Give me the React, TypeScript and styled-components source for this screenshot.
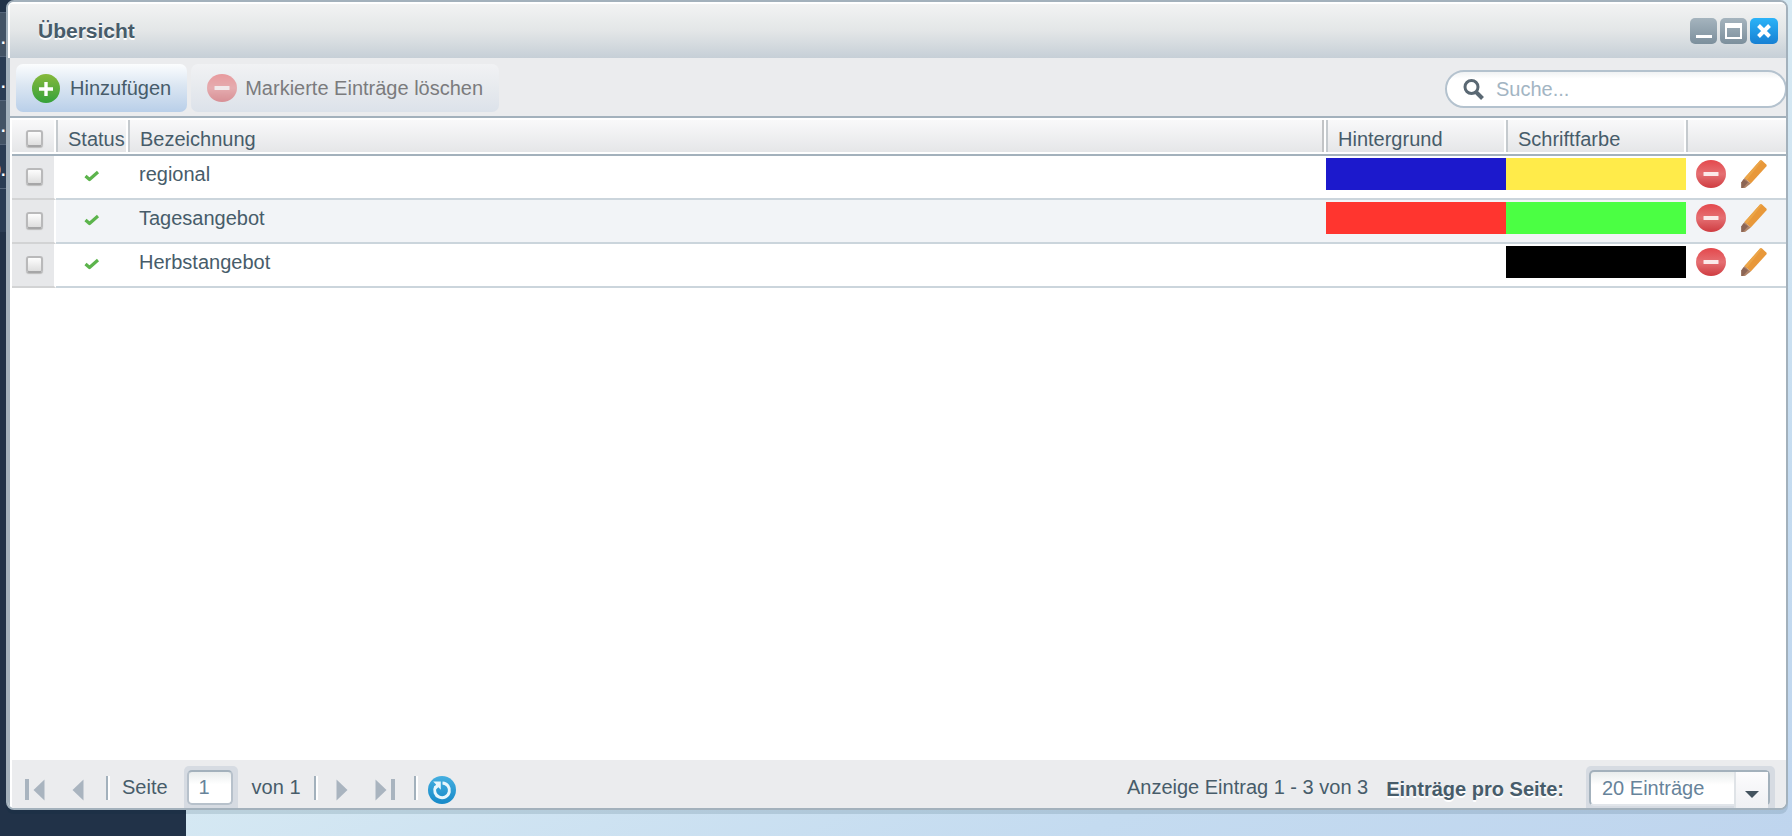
import React, { useState } from "react";
import styled, { createGlobalStyle } from "styled-components";

const line = "#a3b1bc";
const ink = "#475c6a";
const panel = "#ebecee";

const GlobalStyle = createGlobalStyle`
  *, *::before, *::after { box-sizing: border-box; }
  body {
    margin: 0;
    font: 20px/24px "Liberation Sans", Arial, sans-serif;
    color: ${ink};
  }
  button, input, select { font: inherit; color: inherit; margin: 0; padding: 0; }
  button { border: 0; background: none; }
  svg { display: block; }
`;

const Desktop = styled.div`
  position: relative;
  min-height: 100vh;
  overflow: hidden;
  background: linear-gradient(to bottom right, #dcf0f7, #d6e9f3 52%, #c4dbf0 80%, #bfd5ee);
`;

const Sidebar = styled.ul`
  position: absolute;
  top: 0;
  bottom: 0;
  left: 0;
  width: 186px;
  margin: 0;
  padding: 12px 0 0;
  list-style: none;
  overflow: hidden;
  background: #213248;
`;

const SidebarItem = styled.li<{ $light?: boolean; $clipped?: boolean }>`
  height: 44px;
  padding-top: 14px;
  border-top: 1px solid #55657a;
  font-size: 16px;
  line-height: 24px;
  font-weight: bold;
  color: #fff;
  text-indent: ${(p) => (p.$clipped ? "-8px" : "1px")};
  background: ${(p) => (p.$light ? "#435365" : "#2a3c53")};
`;

const Window = styled.section`
  position: relative;
  display: flex;
  flex-direction: column;
  min-height: calc(100vh - 26px);
  margin: 0 4px 26px 6px;
  border: 2px solid ${line};
  border-radius: 8px;
  overflow: hidden;
  background: #fff;
  box-shadow: 0 4px 0 rgba(0, 40, 60, 0.12);
`;

const TitleBar = styled.header`
  display: flex;
  align-items: center;
  height: 56px;
  padding: 0 8px 0 28px;
  border-top: 2px solid #fff;
  border-left: 2px solid #fff;
  background: linear-gradient(#f2f3f3, #e3e6e7 50%, #c6cfd7);
`;

const Title = styled.h1`
  flex: 1;
  margin: 0;
  font-size: 21px;
  line-height: 28px;
  text-shadow: 0 2px 0 #fff;
`;

const WindowControls = styled.div`
  display: flex;
  gap: 3px;
`;

const ControlButton = styled.button<{ $close?: boolean }>`
  display: grid;
  place-items: center;
  width: ${(p) => (p.$close ? 28 : 27)}px;
  height: 26px;
  border-radius: 5px;
  background: ${(p) =>
    p.$close ? "linear-gradient(#2bb3f8, #1780d3)" : "linear-gradient(#a5b4be, #7c8f9c)"};
`;

const Body = styled.div`
  flex: 1;
  display: flex;
  flex-direction: column;
  border-left: 2px solid ${line};
`;

const Toolbar = styled.div`
  display: flex;
  align-items: center;
  gap: 4px;
  height: 60px;
  padding: 2px 0 0 6px;
  border-bottom: 2px solid ${line};
  background: ${panel};
`;

const ToolButton = styled.button<{ $gap: number }>`
  display: flex;
  align-items: center;
  gap: ${(p) => p.$gap}px;
  height: 48px;
  padding: 0 16px;
  border-radius: 7px;
  white-space: nowrap;
  background: linear-gradient(#fbfdfe, #dbe6f2 45%, #b9cfe9);
  &:disabled {
    color: #7b7b7d;
    background: linear-gradient(#f1f2f4, #e7eaee 50%, #dce2ea);
  }
  &:disabled svg { opacity: 0.5; }
`;

const SearchBox = styled.label`
  display: flex;
  align-items: center;
  width: 342px;
  height: 38px;
  margin: 2px -1px 0 auto;
  padding-left: 16px;
  border: 2px solid #b4c2ce;
  border-radius: 19px;
  background: linear-gradient(#f0f2f3, #fff 20%);
`;

const SearchInput = styled.input`
  flex: 1;
  min-width: 0;
  margin-left: 12px;
  border: 0;
  outline: 0;
  background: transparent;
  &::placeholder { color: #a3b5c3; opacity: 1; }
`;

const Grid = styled.div`
  flex: 1;
  padding-left: 2px;
`;

const Table = styled.table`
  width: 100%;
  table-layout: fixed;
  border-spacing: 0;
`;

const Col = styled.col<{ $w?: number }>`
  width: ${(p) => (p.$w ? `${p.$w}px` : "auto")};
`;

const HeadCell = styled.th`
  padding: 2px 0;
  border-bottom: 2px solid ${line};
  font-weight: normal;
  text-align: left;
`;

const HeadLabel = styled.div<{ $first?: boolean; $last?: boolean; $double?: boolean }>`
  height: 32px;
  padding: ${(p) => (p.$first ? "10px 0 0 14px" : "7px 0 0 10px")};
  border-left: ${(p) => (p.$first ? "0" : "2px solid #c5cace")};
  border-right: ${(p) => (p.$double ? "2px solid #c2c4c6" : "0")};
  margin-right: ${(p) => (p.$last ? 0 : 2)}px;
  line-height: 24px;
  white-space: nowrap;
  background: linear-gradient(#f9f9fa, #e5e6e8);
`;

const Row = styled.tr`
  &:nth-child(even) { background: #f2f4f7; }
`;

const Cell = styled.td`
  height: 44px;
  padding: 0;
  border-bottom: 2px solid #cbd5dc;
  vertical-align: top;
`;

const CheckCell = styled(Cell)`
  padding: 12px 0 0 14px;
  border-bottom-color: #d2d3d4;
  border-right: 2px solid #fff;
  background: #e7e8ea;
`;

const StatusCell = styled(Cell)`
  padding: 14px 0 0 28px;
`;

const NameCell = styled(Cell)`
  padding: 6px 0 0 11px;
`;

const Swatch = styled.div<{ $color?: string }>`
  height: 32px;
  margin-top: 2px;
  background: ${(p) => p.$color ?? "transparent"};
`;

const Actions = styled.div`
  display: flex;
  gap: 14px;
  padding: 4px 0 0 10px;
`;

const CheckBox = styled.input`
  appearance: none;
  display: block;
  width: 17px;
  height: 17px;
  border: 2px solid #b9b9ba;
  border-bottom-color: #a6a6a7;
  border-radius: 3px;
  background: linear-gradient(#fdfdfd, #dedede);
  box-shadow: 0 1px 1px #bbb;
  &:checked { background: #8fa4b3; }
`;

const Footer = styled.footer`
  display: flex;
  align-items: center;
  height: 48px;
  margin-left: 2px;
  padding: 6px 11px 0 11px;
  background: ${panel};
  white-space: nowrap;
`;

const PageButton = styled.button<{ $w: number }>`
  display: grid;
  place-items: center;
  width: ${(p) => p.$w}px;
  height: 28px;
  margin-top: 6px;
`;

const Divider = styled.span`
  width: 4px;
  height: 24px;
  margin-top: 2px;
  border-left: 2px solid ${line};
  border-right: 2px solid #fff;
`;

const Pager = styled.div`
  display: flex;
  align-items: center;
`;

const Gap = styled.span<{ $w: number }>`
  width: ${(p) => p.$w}px;
`;

const FieldFrame = styled.div<{ $w: number }>`
  position: relative;
  width: ${(p) => p.$w}px;
  height: 42px;
  padding: 4px 5px 3px 3px;
  border-radius: 5px 5px 0 0;
  background: #d6dbe2;
`;

const PageInput = styled.input`
  display: block;
  width: 100%;
  height: 35px;
  padding-left: 10px;
  border: 2px solid #b7c1cb;
  border-top-color: ${line};
  border-radius: 5px;
  color: #67839a;
  background: linear-gradient(#e9eded, #fff 40%);
`;

const PageSize = styled.select`
  appearance: none;
  display: block;
  width: 100%;
  height: 36px;
  padding: 0 44px 0 11px;
  border: 2px solid ${line};
  border-bottom-color: #e1e5ea;
  border-radius: 5px;
  color: #67839a;
  background: linear-gradient(#e9eded, #fff 40%);
`;

const SelectArrow = styled.span`
  position: absolute;
  top: 6px;
  right: 7px;
  display: grid;
  place-items: center;
  width: 34px;
  height: 36px;
  padding-top: 8px;
  border-left: 2px solid #dfe3e7;
  background: linear-gradient(#fcfcfd, #eff0f3);
  pointer-events: none;
`;

const RefreshButton = styled(PageButton)`
  margin-top: 6px;
`;

const RangeText = styled.span`
  margin-left: auto;
`;

const SizeLabel = styled.label`
  margin: 4px 22px 0 18px;
  font-weight: bold;
  text-shadow: 0 2px 0 #fff;
`;

function Gradient({ id, from, mid, to }: { id: string; from: string; mid?: string; to: string }) {
  return (
    <defs>
      <linearGradient id={id} x1="0" y1="0" x2="0" y2="1">
        <stop offset="0" stopColor={from} />
        {mid && <stop offset="0.5" stopColor={mid} />}
        <stop offset="1" stopColor={to} />
      </linearGradient>
    </defs>
  );
}

const AddIcon = () => (
  <svg width="28" height="29" viewBox="0 0 28 29" aria-hidden="true">
    <Gradient id="add" from="#86b93c" to="#35a13a" />
    <ellipse cx="14" cy="14.5" rx="14" ry="14.5" fill="url(#add)" />
    <path d="M14 8v14M7 15h14" stroke="#fff" strokeWidth="3.4" />
  </svg>
);

const RemoveIcon = ({ id }: { id: string }) => (
  <svg width="30" height="28" viewBox="0 0 30 28" aria-hidden="true">
    <Gradient id={id} from="#e4484c" mid="#e57073" to="#cf3c41" />
    <ellipse cx="15" cy="14" rx="15" ry="14" fill={`url(#${id})`} />
    <rect x="7.5" y="12" width="15" height="4" rx="0.5" fill="#fbe9e9" />
  </svg>
);

const PencilIcon = () => (
  <svg width="28" height="28" viewBox="0 0 28 28" aria-hidden="true">
    <path d="M20 .6q1-.9 2 0l4.300 4q.8.9 0 1.900L10.800 23.500 4.500 18z" fill="#e8983a" />
    <path d="M20 .6q1-.9 2 .1L6.800 20l-2.300-2z" fill="#eba548" />
    <path d="M4.500 18l6.300 5.500L5 28H1.300V22.500z" fill="#b08468" />
    <path d="M3.500 19.300l4.500 3L3 28H1.300V22.500z" fill="#8c6656" />
  </svg>
);

const CheckIcon = () => (
  <svg width="16" height="12" viewBox="0 0 16 12" aria-hidden="true">
    <path d="M1.500 6l4 3.500L14 2" fill="none" stroke="#5cb44c" strokeWidth="3.200" strokeLinejoin="round" />
  </svg>
);

const SearchIcon = () => (
  <svg width="21" height="21" viewBox="0 0 21 21" fill="none" stroke="#5a6873" aria-hidden="true">
    <circle cx="8.500" cy="8" r="6.500" strokeWidth="3" />
    <path d="M13 13l6.500 6.500" strokeWidth="4" />
  </svg>
);

const Arrow = ({ back, bar }: { back?: boolean; bar?: boolean }) => (
  <svg width={bar ? 20 : 12} height="22" viewBox={bar ? "0 0 20 22" : "0 0 12 22"} fill="#a9b4bf" aria-hidden="true">
    <g transform={back ? `translate(${bar ? 20 : 12} 0) scale(-1 1)` : undefined}>
      <path d="M0.500 0.500L11.500 11 0.500 21.500z" />
      {bar && <rect x="16" y="0" width="4" height="21" />}
    </g>
  </svg>
);

const RefreshIcon = () => (
  <svg width="28" height="28" viewBox="0 0 28 28" aria-hidden="true">
    <Gradient id="refresh" from="#45afe0" to="#1689c8" />
    <circle cx="14" cy="14" r="14" fill="url(#refresh)" />
    <path d="M14.500 6.900a7.400 7.400 0 1 1-6.800 3.600" fill="none" stroke="#e8f6fc" strokeWidth="3" />
    <path d="M5.200 5.500h7.600v8.200l-2.400-2.400-2 1.700-2-2.200 1.700-2.200z" fill="#e8f6fc" />
  </svg>
);

const rows = [
  { name: "regional", background: "#1c19cc", color: "#ffeb4a" },
  { name: "Tagesangebot", background: "#ff352f", color: "#4bff43" },
  { name: "Herbstangebot", background: undefined, color: "#000" },
];

export default function App() {
  const [page, setPage] = useState("1");
  return (
    <Desktop>
      <GlobalStyle />
      <Sidebar aria-hidden="true">
        <SidebarItem $light>.</SidebarItem>
        <SidebarItem>.</SidebarItem>
        <SidebarItem $light>.</SidebarItem>
        <SidebarItem $clipped>0.</SidebarItem>
        <SidebarItem />
      </Sidebar>
      <Window aria-labelledby="title">
        <TitleBar>
          <Title id="title">Übersicht</Title>
          <WindowControls>
            <ControlButton aria-label="Minimieren">
              <svg width="16" height="16"><rect y="12" width="16" height="3" fill="#fff" /></svg>
            </ControlButton>
            <ControlButton aria-label="Maximieren">
              <svg width="17" height="16">
                <path d="M0 0h17v16H0zM2 5v9h13V5z" fill="#fff" fillRule="evenodd" />
              </svg>
            </ControlButton>
            <ControlButton $close aria-label="Schließen">
              <svg width="14" height="14"><path d="M1.500 1.500l11 11M12.500 1.500l-11 11" stroke="#fff" strokeWidth="4" /></svg>
            </ControlButton>
          </WindowControls>
        </TitleBar>
        <Body>
          <Toolbar>
            <ToolButton $gap={10}><AddIcon />Hinzufügen</ToolButton>
            <ToolButton $gap={8} disabled><RemoveIcon id="remove-all" />Markierte Einträge löschen</ToolButton>
            <SearchBox>
              <SearchIcon />
              <SearchInput aria-label="Suche" placeholder="Suche..." />
            </SearchBox>
          </Toolbar>
          <Grid>
            <Table>
              <colgroup>
                <Col $w={44} />
                <Col $w={72} />
                <Col />
                <Col $w={180} />
                <Col $w={180} />
                <Col $w={100} />
              </colgroup>
              <thead>
                <tr>
                  <HeadCell>
                    <HeadLabel $first>
                      <CheckBox type="checkbox" aria-label="Alle markieren" />
                    </HeadLabel>
                  </HeadCell>
                  <HeadCell><HeadLabel>Status</HeadLabel></HeadCell>
                  <HeadCell><HeadLabel $double>Bezeichnung</HeadLabel></HeadCell>
                  <HeadCell><HeadLabel>Hintergrund</HeadLabel></HeadCell>
                  <HeadCell><HeadLabel>Schriftfarbe</HeadLabel></HeadCell>
                  <HeadCell aria-label="Aktionen"><HeadLabel $last /></HeadCell>
                </tr>
              </thead>
              <tbody>
                {rows.map((row, i) => (
                  <Row key={row.name}>
                    <CheckCell><CheckBox type="checkbox" aria-label={`${row.name} markieren`} /></CheckCell>
                    <StatusCell><CheckIcon /></StatusCell>
                    <NameCell>{row.name}</NameCell>
                    <Cell><Swatch $color={row.background} /></Cell>
                    <Cell><Swatch $color={row.color} /></Cell>
                    <Cell>
                      <Actions>
                        <button aria-label={`${row.name} löschen`}><RemoveIcon id={`remove-${i}`} /></button>
                        <button aria-label={`${row.name} bearbeiten`}><PencilIcon /></button>
                      </Actions>
                    </Cell>
                  </Row>
                ))}
              </tbody>
            </Table>
          </Grid>
          <Footer>
            <Pager>
              <PageButton $w={24} aria-label="Erste Seite"><Arrow back bar /></PageButton>
              <Gap $w={24} />
              <PageButton $w={14} aria-label="Vorige Seite"><Arrow back /></PageButton>
              <Gap $w={21} />
              <Divider />
              <Gap $w={12} />
              <label htmlFor="page">Seite</label>
              <Gap $w={16} />
              <FieldFrame $w={54}>
                <PageInput id="page" value={page} onChange={(e) => setPage(e.target.value)} />
              </FieldFrame>
              <Gap $w={14} />
              <span>von 1</span>
              <Gap $w={13} />
              <Divider />
              <Gap $w={17} />
              <PageButton $w={14} aria-label="Nächste Seite"><Arrow /></PageButton>
              <Gap $w={24} />
              <PageButton $w={24} aria-label="Letzte Seite"><Arrow bar /></PageButton>
              <Gap $w={17} />
              <Divider />
              <Gap $w={10} />
              <RefreshButton $w={28} aria-label="Aktualisieren"><RefreshIcon /></RefreshButton>
            </Pager>
            <RangeText>Anzeige Eintrag 1 - 3 von 3</RangeText>
            <SizeLabel htmlFor="size">Einträge pro Seite:</SizeLabel>
            <FieldFrame $w={189}>
              <PageSize id="size" defaultValue="20">
                <option value="20">20 Einträge</option>
                <option value="40">40 Einträge</option>
                <option value="60">60 Einträge</option>
              </PageSize>
              <SelectArrow>
                <svg width="14" height="7" aria-hidden="true"><path d="M0 0h14L7 7z" fill="#43535e" /></svg>
              </SelectArrow>
            </FieldFrame>
          </Footer>
        </Body>
      </Window>
    </Desktop>
  );
}
